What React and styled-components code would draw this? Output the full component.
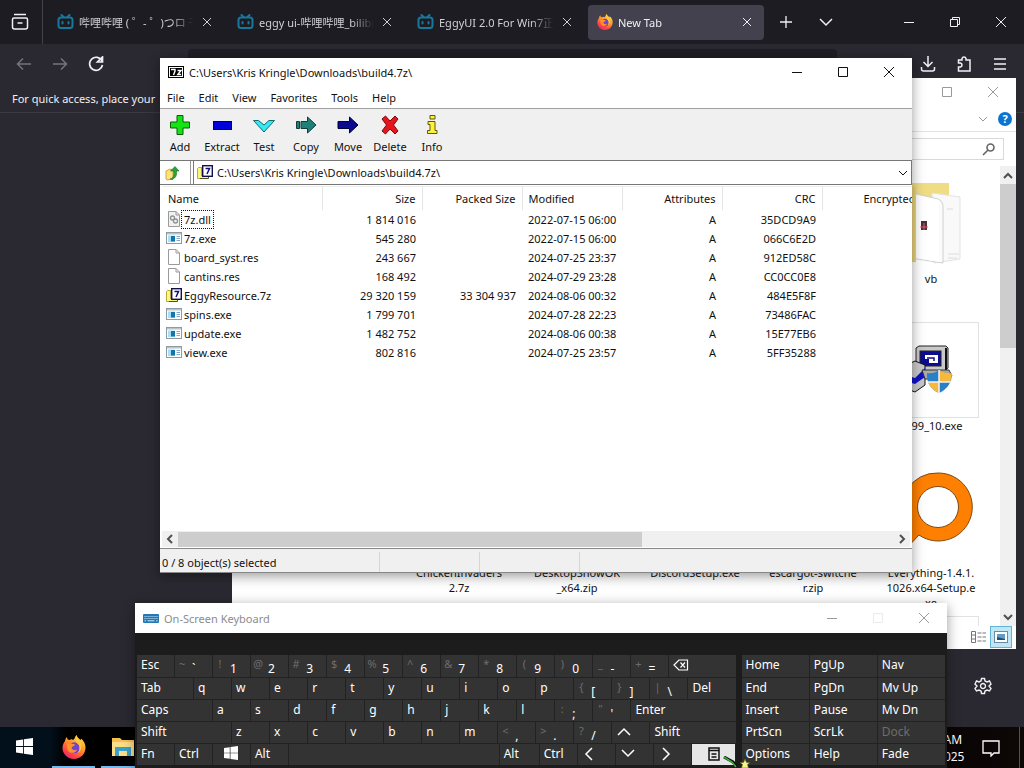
// Desktop - Windows session with a browser, file explorer, 7-Zip and the on-screen keyboard

import React, { useState } from 'react';
import styled, { createGlobalStyle, css } from 'styled-components';

const GlobalStyle = createGlobalStyle`
  * { box-sizing: border-box; }
  body {
    margin: 0;
    overflow: hidden;
    background: #000;
    font-family: "Noto Sans", "Open Sans", "Noto Sans CJK SC", sans-serif;
    font-size: 11px;
    line-height: 15px;
    color: #111;
  }
  button, input, select { font: inherit; color: inherit; }
  button { padding: 0; border: 0; background: none; }
`

const Desktop = styled.div`
  position: relative;
  display: flex;
  flex-direction: column;
  height: 100vh;
  overflow: hidden;
`

const Win = styled.section`
  position: absolute;
  left: ${p => p.$x}px;
  top: ${p => p.$y}px;
  width: ${p => p.$w}px;
  height: ${p => p.$h ? p.$h + 'px' : 'auto'};
  display: flex;
  flex-direction: column;
  background: #fff;
  box-shadow: ${p => p.$flat ? 'none' : '0 3px 12px rgba(0, 0, 0, 0.4)'};
`

const TitleBar = styled.header`
  display: flex;
  align-items: center;
  flex: none;
  height: ${p => p.$h || 28}px;
  padding-left: 8px;
  gap: 5px;
  color: ${p => p.$dim ? '#8c8c8c' : '#111'};
`

const Title = styled.h1`
  margin: 0;
  flex: 1;
  font-size: 11px;
  font-weight: 400;
  white-space: nowrap;
`

const Controls = styled.div`
  display: flex;
  color: ${p => p.$color || '#111'};
`

const ControlButton = styled.button`
  width: 46px;
  height: 28px;
  display: grid;
  place-items: center;
  opacity: ${p => p.$faint ? 0.2 : 1};
`

/* ---------- browser ---------- */

const Browser = styled.main`
  flex: 1;
  min-height: 0;
  display: flex;
  flex-direction: column;
  background: #2a2931;
  color: #f0f0f4;
`

const TabStrip = styled.div`
  height: 44px;
  flex: none;
  display: flex;
  align-items: center;
  background: #1d1c23;
`

const SidebarButton = styled.button`
  width: 43px;
  height: 44px;
  padding-right: 3px;
  display: grid;
  place-items: center;
  border-right: 1px solid #44434b;
  margin-right: 5px;
`

const Tab = styled.div`
  width: 176px;
  height: 35px;
  margin-right: 4px;
  padding: 0 8px 0 9px;
  display: flex;
  align-items: center;
  gap: 5px;
  border-radius: 4px;
  background: ${p => p.$active ? '#42414d' : 'transparent'};
  color: ${p => p.$active ? '#f0f0f4' : '#cfcfd4'};
`

const TabLabel = styled.span`
  flex: 1;
  margin-right: -7px;
  overflow: hidden;
  white-space: nowrap;
  mask-image: linear-gradient(to right, #000 76%, transparent 95%);
`

const IconButton = styled.button`
  width: ${p => p.$w || 36}px;
  height: 36px;
  display: grid;
  place-items: center;
  color: ${p => p.$dim ? '#75747b' : 'inherit'};
`

const Spacer = styled.div`
  flex: 1;
`

const NavBar = styled.div`
  height: 40px;
  flex: none;
  display: flex;
  align-items: center;
  padding: 0 6px;
`

const UrlField = styled.input`
  flex: 1;
  height: 30px;
  margin: 0 73px 0 74px;
  border: 0;
  border-radius: 4px;
  background: #1f1e24;
`

const BookmarkBar = styled.div`
  height: 29px;
  flex: none;
  padding: 7px 12px;
  border-bottom: 1px solid #3a3941;
  white-space: nowrap;
`

const Customize = styled.button`
  margin: auto 32px 30px auto;
  color: #f0f0f4;
  width: 18px;
  height: 20px;
`

/* ---------- explorer ---------- */

const RibbonRow = styled.div`
  height: 26px;
  flex: none;
  display: flex;
  align-items: center;
  justify-content: flex-end;
  gap: 10px;
  padding-right: 4px;
  border-bottom: 1px solid #e4e4e4;
  color: #999;
`

const HelpBadge = styled.button`
  width: 14px;
  height: 14px;
  border-radius: 50%;
  background: #0a74d0;
  color: #fff;
  font-weight: 700;
  line-height: 14px;
`

const SearchRow = styled.div`
  height: 34px;
  flex: none;
  display: flex;
  justify-content: flex-end;
  padding: 6px 12px;
`

const SearchBox = styled.label`
  display: flex;
  align-items: center;
  width: 170px;
  height: 22px;
  padding-right: 8px;
  border: 1px solid #d9d9d9;
  color: #666;

  input {
    flex: 1;
    min-width: 0;
    border: 0;
    outline: 0;
  }
`

const ExplorerBody = styled.div`
  flex: 1;
  min-height: 0;
  display: flex;
`

const FileGrid = styled.div`
  flex: 1;
  overflow: hidden;
  display: grid;
  grid-template-columns: repeat(5, 118px);
  grid-auto-rows: 147px;
  justify-content: end;
  padding: 9px 10px 0 0;
`

const FileItem = styled.div`
  display: flex;
  flex-direction: column;
  align-items: center;
  text-align: center;
`

const Thumb = styled.div`
  width: 96px;
  height: 96px;
  flex: none;
  display: grid;
  place-items: center;
  border: 1px solid ${p => p.$framed ? '#e2e2e2' : 'transparent'};
`

const FileName = styled.span`
  white-space: pre;
`

const VScroll = styled.div`
  width: 16px;
  display: flex;
  flex-direction: column;
  align-items: center;
  background: #f0f0f0;
  color: #505050;

  button {
    height: 18px;
    flex: none;
  }
`

const VThumb = styled.div`
  width: 16px;
  height: 164px;
  background: #cdcdcd;
  margin-bottom: auto;
`

const ExplorerStatus = styled.footer`
  height: 23px;
  flex: none;
  display: flex;
  justify-content: flex-end;
  padding-right: 4px;
`

const ViewButton = styled.button`
  width: 22px;
  height: 22px;
  display: grid;
  place-items: center;
  border: 1px solid ${p => p.$on ? '#5fb4d8' : 'transparent'};
  background: ${p => p.$on ? '#bfe6f7' : 'transparent'};
`

/* ---------- 7-Zip ---------- */

const MenuBar = styled.nav`
  display: flex;
  gap: 14px;
  height: 23px;
  flex: none;
  padding: 4px 7px;
  border-bottom: 1px solid #a0a0a0;
`

const Toolbar = styled.div`
  display: flex;
  height: 51px;
  flex: none;
  background: #f0f0f0;
`

const Tool = styled.button`
  width: 42px;
  padding: 5px 2px 0 0;
  display: flex;
  flex-direction: column;
  align-items: center;
  gap: 3px;

  svg { flex: none; }
`

const AddressRow = styled.div`
  display: flex;
  gap: 2px;
  height: 25px;
  flex: none;
  border-top: 1px solid #777;
  border-bottom: 1px solid #777;
`

const UpButton = styled.button`
  width: 31px;
  padding-right: 5px;
  display: grid;
  place-items: center;
  border-right: 1px solid #999;
`

const Combo = styled.label`
  flex: 1;
  display: flex;
  align-items: center;
  gap: 4px;
  padding: 0 3px;
  border: 0 solid #777;
  border-width: 0 1px;

  select {
    flex: 1;
    appearance: none;
    border: 0;
    padding: 0;
    background: none;
    outline: 0;
  }
`

const ListArea = styled.div`
  flex: 1;
  min-height: 0;
  overflow: hidden;
  padding: 1px 1px 0 2px;
`

const FileTable = styled.table`
  width: 860px;
  table-layout: fixed;
  border-collapse: collapse;

  th {
    height: 23px;
    padding: 0 6px;
    font-weight: 400;
    border-right: 1px solid #e5e5e5;
    border-top: 1px solid #ededed;
  }

  td {
    height: 19px;
    padding: 0 6px;
    white-space: nowrap;
  }

  td:first-child { padding: 0 4px; }
`

const cell = css`
  text-align: ${p => p.$left ? 'left' : 'right'};
`

const Th = styled.th`
  ${cell}
`

const Td = styled.td`
  ${cell}
`

const NameCell = styled.span`
  display: flex;
  align-items: center;

  span {
    padding: 1px 2px;
    outline: ${p => p.$focused ? '1px dotted #111' : 'none'};
  }
`

const HScroll = styled.div`
  display: flex;
  align-items: center;
  height: 16px;
  flex: none;
  margin: 0 2px 1px;
  background: #f0f0f0;
  color: #505050;

  button {
    width: 16px;
    height: 16px;
    line-height: 0;
  }
`

const HThumb = styled.div`
  width: 62%;
  height: 15px;
  margin-right: auto;
  background: #cdcdcd;
`

const StatusBar = styled.footer`
  display: flex;
  height: 25px;
  flex: none;
  padding-top: 3px;
  background: #f0f0f0;
  border-top: 1px solid #888;
  border-bottom: 1px solid #888;
`

const StatusPart = styled.span`
  width: ${p => p.$w}px;
  padding: 3px 0 0 2px;
  border-right: 1px solid #d5d5d5;
`

/* ---------- on-screen keyboard ---------- */

const KeyboardBody = styled.div`
  display: flex;
  gap: 6px;
  padding: 22px 2px 4px;
  background: #1c1c1c;
  color: #fff;
`

const KeyPad = styled.div`
  flex: ${p => p.$grow} 1 0;
  min-width: 0;
  display: flex;
  flex-direction: column;
  gap: 1px;
  background: #222;
`

const KeyRow = styled.div`
  display: flex;
  gap: 1px;
  height: 21px;

  &:first-child { height: 22px; }
`

const Key = styled.button`
  flex: ${p => p.$u || 38} 1 ${p => (p.$u || 38) - 1}px;
  min-width: 0;
  display: flex;
  gap: 5px;
  align-items: flex-start;
  padding: 2px 4px;
  font-size: 12px;
  background: ${p => p.$light ? '#e6e6e6' : '#333'};
  color: ${p => p.$light ? '#111' : p.$dim ? '#6d6d6d' : '#fff'};
  justify-content: ${p => p.$center ? 'center' : 'flex-start'};

  svg { flex: none; }
`

const ShiftMark = styled.span`
  width: 10px;
  margin-left: -2px;
  line-height: 13px;
  color: #6d6d6d;
  font-size: 11px;
  text-align: center;
`

const BaseMark = styled.span`
  padding-top: 4px;
`

/* ---------- taskbar ---------- */

const Taskbar = styled.footer`
  height: 41px;
  flex: none;
  display: flex;
  background: linear-gradient(to right, #02101b 0, #02101b 50px, #000 66px, #000 70%, #0d0706 100%);
  color: #fff;
`

const TaskButton = styled.button`
  width: 49px;
  display: grid;
  place-items: center;
  border-bottom: 2px solid transparent;
  border-image: ${p => p.$open ? 'linear-gradient(to right, transparent 5px, #76b9ed 5px, #76b9ed 44px, transparent 44px) 2' : 'none'};
`

const Clock = styled.time`
  margin-left: auto;
  padding-top: 4px;
  width: 60px;
  font-size: 12px;
  line-height: 17px;
  text-align: center;
`

const NotifyButton = styled.button`
  width: 54px;
  margin-right: 4px;
  padding-right: 4px;
  border-right: 1px solid #55514f;
  display: grid;
  place-items: center;
`

const Pointer = styled.svg`
  position: absolute;
  left: 723px;
  top: 756px;
`

/* ---------- drawings ---------- */

const Line = ({ d, w = 12, sw = 1, color = 'currentColor', ...rest }) => (
    <svg width={w} height={w} viewBox={`0 0 ${w} ${w}`} fill='none' stroke={color} strokeWidth={sw} {...rest}>
        <path d={d} />
    </svg>
)

const CloseGlyph = ({ w = 12, sw = 1 }) => <Line w={w} sw={sw} d={`M1 1L${w - 1} ${w - 1}M${w - 1} 1L1 ${w - 1}`} />
const ChevronDown = ({ w = 10, sw = 1 }) => <Line w={w} sw={sw} d={`M1 ${w / 2 - 2}L${w / 2} ${w / 2 + 2}L${w - 1} ${w / 2 - 2}`} />

const WindowControls = ({ color, restore, faintMax }) => (
    <Controls $color={color}>
        <ControlButton aria-label='Minimize'><Line d='M1 6.5H11' /></ControlButton>
        <ControlButton aria-label='Maximize' $faint={faintMax}>
            <Line d={restore ? 'M1.5 3.5H8.5V10.5H1.5zM3.5 3V1.5H10.5V8.5H9' : 'M1.5 1.5H10.5V10.5H1.5z'} />
        </ControlButton>
        <ControlButton aria-label='Close'><CloseGlyph /></ControlButton>
    </Controls>
)

const BiliIcon = () => (
    <svg width='17' height='16' viewBox='0 0 17 16' fill='none' stroke='#16789c' strokeWidth='2' strokeLinecap='round'>
        <path d='M4.5 1L6.5 3M12.5 1L10.5 3' />
        <rect x='1.5' y='3.5' width='14' height='10.5' rx='2.5' />
        <path d='M5.5 8V9.5M11.5 8V9.5' />
    </svg>
)

const FirefoxIcon = ({ size }) => (
    <svg width={size} height={size} viewBox='0 0 24 24'>
        <defs>
            <linearGradient id='fox' x1='0.8' y1='0' x2='0.2' y2='1'>
                <stop offset='0' stopColor='#ffe14d' />
                <stop offset='0.4' stopColor='#ff9a2a' />
                <stop offset='0.75' stopColor='#ff4545' />
                <stop offset='1' stopColor='#e0207c' />
            </linearGradient>
        </defs>
        <path fill='url(#fox)' d='M3 6C3 4.500 4 3 5 2C5 4 6 5 7.500 5C9 4 10 4 11 5C13 4 12.500 2 14.500 0C15 2.500 17 3.500 18.500 5C19 4.800 19 4 19 3.500C22 6 23.500 9 23.500 12.500C23.500 19 18.500 24 12 24C5.500 24 .5 19 .5 13C.5 10 1.500 8 3 6z' />
        <circle cx='12.300' cy='12.800' r='5.500' fill='#7542d6' />
        <path fill='#ff9426' d='M5 9C7 8 9 8 10.500 9C12 9 13 9.500 13 10C12 11.500 10 11 9.500 13C10 15 13 16 15 14.500C14 18.500 8 19 6 15.500C5 13 5 11 5 9z' />
        <path fill='#ffc83a' d='M14.500 0C15 3 19.500 5 19.500 11C19.500 14 18 17 16 18C18 15 18 11 16 9C15 8 12 5 14.500 0z' />
    </svg>
)

const WindowsLogo = ({ size }) => (
    <svg width={size} height={size} viewBox='0 0 16 16' fill='#fff'>
        <path d='M0 2.300L6.600 1.300V7.600H0zM7.400 1.200L16 0V7.600H7.400zM0 8.400H6.600V14.700L0 13.700zM7.400 8.400H16V16L7.400 14.800z' />
    </svg>
)

const SevenZipIcon = () => (
    <svg width='16' height='12' viewBox='0 0 16 12'>
        <rect width='16' height='12' fill='#000' />
        <rect x='1.500' y='1.500' width='13' height='9' fill='none' stroke='#fff' />
        <path d='M3 3.500H7V5L5.500 9M9.500 4.500H13L9.800 8.500H13.200' fill='none' stroke='#fff' strokeWidth='1.400' />
    </svg>
)

const ArchiveIcon = () => (
    <svg width='16' height='15' viewBox='0 0 16 15'>
        <path d='M.5 3.500L1.500 2.500H6V13.500H.5z' fill='#fdf67a' stroke='#b8aa3c' />
        <path d='M3 13.500H11.500V11H5V3' fill='#fdf67a' stroke='#555020' />
        <rect x='5.700' y='.7' width='9.600' height='10.600' fill='#fff' stroke='#10104a' strokeWidth='1.400' />
        <path d='M8.500 3.500H12.500L10 9' fill='none' stroke='#10107a' strokeWidth='1.500' />
    </svg>
)

const ExeIcon = () => (
    <svg width='16' height='12' viewBox='0 0 16 12'>
        <rect x='.5' y='.5' width='15' height='11' fill='#fff' stroke='#8f9aa3' />
        <rect x='1' y='1' width='14' height='1.500' fill='#b9c4cc' />
        <rect x='2' y='3.500' width='7' height='6.500' fill='#a9e0f5' />
        <rect x='5' y='4' width='4' height='5.500' fill='#1376a8' />
        <path d='M10.500 4.500H14M10.500 6.500H14M10.500 8.500H14' stroke='#7aa9cc' />
    </svg>
)

const PageIcon = ({ gears }) => (
    <svg width='16' height='16' viewBox='0 0 16 16' fill='none' stroke='#9a9a9a'>
        <path d='M2.500 .5H10L13.500 4V15.500H2.500z' fill={gears ? '#f1f1f1' : '#fff'} />
        <path d='M10 .5V4H13.500' />
        {gears && <g stroke='#8c9296' strokeWidth='1.300'><circle cx='6.500' cy='7' r='2' /><circle cx='9.500' cy='10' r='2' /></g>}
    </svg>
)

const icons = {
    dll: <PageIcon gears />,
    exe: <ExeIcon />,
    res: <PageIcon />,
    '7z': <ArchiveIcon />
}

const UpIcon = () => (
    <svg width='15' height='16' viewBox='0 0 15 16'>
        <path d='M1 6L5 4L8 5V14L2 15L1 14z' fill='#ffe27a' stroke='#d1ab3a' />
        <path d='M5 14C9 13 9 10 8.500 6H5.500L10 1.500L14 6H11.500C12 10 11 13 7 14.500z' fill='#2fa03b' stroke='#1b6f26' strokeWidth='.6' />
    </svg>
)

const toolIcons = {
    Add: <path d='M8 1.500H14V8H20.500V14H14V20.500H8V14H1.500V8H8z' fill='#14e314' stroke='#0a5c0a' />,
    Extract: <rect x='2.500' y='7.500' width='18' height='8' fill='#0000d8' stroke='#000050' />,
    Test: <path d='M.5 6.500H5.500L11 11L16 6.500H21.500L11 18z' fill='#35e9f2' stroke='#116a70' />,
    Copy: <path d='M1.500 7.500H4.500V14.500H1.500zM6 7.500H12.500V3L21 11L12.500 19V14.500H6z' fill='#1f8078' stroke='#113a38' />,
    Move: <path d='M1 7.500H12.500V3L21 11L12.500 19V14.500H1z' fill='#0a0a90' stroke='#000038' />,
    Delete: <path d='M3 5L6.500 2L11 7L16 2L19 5L14.500 11L19 17L16 20L11 15L6.500 20L3 17L7.500 11z' fill='#e8141c' stroke='#7c0a0e' />,
    Info: <path d='M9 1.500H14V5H9zM7 7.500H14V16.500H16V19.500H6.500V16.500H9V10.500H7z' fill='#fff23a' stroke='#5c5610' />
}

const VbFolder = () => (
    <svg width='96' height='88' viewBox='0 0 96 88'>
        <path d='M8 4H65V30L8 84z' fill='#f0dc83' />
        <path d='M48 14L76 18V80L50 84z' fill='#f9f9f9' stroke='#e3e3e3' />
        <path d='M20 12L54 20Q59 22 59 28V84L20 78z' fill='#fbfbfb' stroke='#d0d0d0' />
        <path d='M8 8H32V83L8 84z' fill='#e9d37b' />
        <path d='M32 16L55 21V83L32 79z' fill='#fff' />
        <path d='M37 42H43V51H37z' fill='#4a3038' /><path d='M36 48H44M40 44V51' stroke='#eb5b6a' />
        <path d='M63 30H69M64 75H75M64 79H73' stroke='#d8dfd4' />
    </svg>
)

const SetupIcon = () => (
    <svg width='52' height='50' viewBox='4 0 52 50'>
        <path d='M15 3L18 1H45L47 3V23L43 26H15z' fill='#c9c9c9' stroke='#222' />
        <path d='M45 3V25M17 26H45' stroke='#111' strokeWidth='2' />
        <rect x='19' y='6' width='21' height='15' fill='#0c0c90' stroke='#222' />
        <path d='M24 10H37V18H28V14H24z' fill='#fff' />
        <path d='M26 13H33V16' fill='none' stroke='#0c0c90' strokeWidth='1.500' />
        <path d='M1 22L14 16L24 20V40L14 47L1 42z' fill='#c8c8c8' stroke='#111' />
        <path d='M1 29L14 33L24 23V32L14 39L1 35z' fill='#1010c8' />
        <path d='M21 25H48L51 31L46 34H24z' fill='#aaa' stroke='#333' />
        <path d='M38 25Q44 29 51 28Q51 42 38 48Q25 42 26 28Q33 29 38 25z' fill='#2a80c8' />
        <path d='M38 25Q44 29 51 28Q51 33 49 37H38zM38 37V48Q29 44 27 37z' fill='#f6b93c' />
        <path d='M38 25V48M26 37H50' stroke='#f4f4f4' strokeWidth='1.500' />
    </svg>
)

const EverythingIcon = () => (
    <svg width='90' height='90' viewBox='1 4 90 90'>
        <path d='M53 5A34 34 0 1 1 34 67L18 84L7 73L22 56A34 34 0 0 1 53 5z' fill='#ff8000' stroke='#7e4a16' />
        <circle cx='53' cy='39' r='20.500' fill='#fff' stroke='#7e4a16' />
    </svg>
)

const StarPointer = () => (
    <Pointer width='28' height='12' viewBox='0 0 28 12'>
        <path d='M1 1L10 6L14 11' fill='none' stroke='#111' strokeWidth='3' />
        <path d='M1 1L9 6L13 11' fill='none' stroke='#3fae3a' strokeWidth='1.500' />
        <path d='M22 3L23.500 6.500H27L24.500 8.500L25.500 12H18.500L19.500 8.500L17 6.500H20.500z' fill='#f6f58a' stroke='#5c5a10' strokeWidth='.6' />
    </Pointer>
)

/* ---------- data ---------- */

const tabs = [
    { title: '哔哩哔哩 ( ゜- ゜)つロ 干杯' },
    { title: 'eggy ui-哔哩哔哩_bilibili' },
    { title: 'EggyUI 2.0 For Win7正式' },
    { title: 'New Tab', active: true }
]

const files = [
    ['7z.dll', '1 814 016', '', '2022-07-15 06:00', '35DCD9A9'],
    ['7z.exe', '545 280', '', '2022-07-15 06:00', '066C6E2D'],
    ['board_syst.res', '243 667', '', '2024-07-25 23:37', '912ED58C'],
    ['cantins.res', '168 492', '', '2024-07-29 23:28', 'CC0CC0E8'],
    ['EggyResource.7z', '29 320 159', '33 304 937', '2024-08-06 00:32', '484E5F8F'],
    ['spins.exe', '1 799 701', '', '2024-07-28 22:23', '73486FAC'],
    ['update.exe', '1 482 752', '', '2024-08-06 00:38', '15E77EB6'],
    ['view.exe', '802 816', '', '2024-07-25 23:57', '5FF35288']
]

const downloads = [
    {}, {}, {}, {}, { name: 'vb', icon: <VbFolder /> },
    {}, {}, {}, {}, { name: 'y399_10.exe', icon: <SetupIcon />, framed: true },
    { name: 'ChickenInvaders\n2.7z' },
    { name: 'DesktopShowOK\n_x64.zip' },
    { name: 'DiscordSetup.exe' },
    { name: 'escargot-switche\nr.zip' },
    { name: 'Everything-1.4.1.\n1026.x64-Setup.e\nxe', icon: <EverythingIcon /> },
    {}, {}, {}, {}, { framed: true }
]

const up = <Line w={16} sw={1.5} d='M2 11L8 5L14 11' />
const down = <Line w={16} sw={1.5} d='M2 4L8 10L14 4' />
const left = <Line w={16} sw={1.5} d='M10 2L4 8L10 14' />
const right = <Line w={16} sw={1.5} d='M5 2L11 8L5 14' />
const erase = <Line w={16} sw={1.2} d='M1 8L6 3H14.5V13H6zM7.5 5.500L12 10.500M12 5.500L7.500 10.500' />
const menu = <Line w={16} sw={1.5} d='M3 2H13V14H3zM3 4.500H13M5.500 8H10.500M5.500 11H10.500' />
const winKey = <WindowsLogo size={14} />

// a plain string is a letter key, otherwise [label, width, shifted mark]
const keyRows = [
    [['Esc'], ['`', 38, '~'], ['1', 38, '!'], ['2', 38, '@'], ['3', 38, '#'], ['4', 38, '$'], ['5', 38, '%'],
        ['6', 38, '^'], ['7', 38, '&'], ['8', 38, '*'], ['9', 38, '('], ['0', 38, ')'], ['-', 38, '_'], ['=', 38, '+'], [erase, 67]],
    [['Tab', 57], 'q', 'w', 'e', 'r', 't', 'y', 'u', 'i', 'o', 'p', ['[', 38, '{'], [']', 38, '}'], ['\\', 38, '|'], ['Del', 48]],
    [['Caps', 76], 'a', 's', 'd', 'f', 'g', 'h', 'j', 'k', 'l', [';', 38, ':'], ["'", 38, '"'], ['Enter', 105]],
    [['Shift', 95], 'z', 'x', 'c', 'v', 'b', 'n', 'm', [',', 38, '<'], ['.', 38, '>'], ['/', 38, '?'], [up], ['Shift', 86]],
    [['Fn'], ['Ctrl'], [winKey], ['Alt'], ['', 211], ['Alt', 40], ['Ctrl'], [left], [down], [right], [menu, 45]]
]

const navKeys = [
    ['Home', 'PgUp', 'Nav'],
    ['End', 'PgDn', 'Mv Up'],
    ['Insert', 'Pause', 'Mv Dn'],
    ['PrtScn', 'ScrLk', 'Dock'],
    ['Options', 'Help', 'Fade']
]

/* ---------- windows ---------- */

const BrowserWindow = () => (
    <Browser>
        <TabStrip>
            <SidebarButton aria-label='Tab list'>
                <Line w={18} sw={1.5} d='M3 1.500H15M3 5H15Q16.500 5 16.500 6.500V14Q16.500 16 14.500 16H3.500Q1.500 16 1.500 14V6.500Q1.500 5 3 5zM6.500 10H11.500' />
            </SidebarButton>
            {tabs.map(tab => (
                <Tab key={tab.title} $active={tab.active}>
                    {tab.active ? <FirefoxIcon size={16} /> : <BiliIcon />}
                    <TabLabel>{tab.title}</TabLabel>
                    <IconButton $w={18} aria-label='Close tab'><CloseGlyph w={10} /></IconButton>
                </Tab>
            ))}
            <IconButton aria-label='New tab'><Line w={14} sw={1.3} d='M7 1V13M1 7H13' /></IconButton>
            <IconButton $w={44} aria-label='List all tabs'>
                <Line w={14} sw={1.5} d='M1 4L7 10L13 4' />
            </IconButton>
            <Spacer />
            <WindowControls color='#f0f0f4' restore />
        </TabStrip>
        <NavBar>
            <IconButton $dim aria-label='Back'><Line w={16} sw={1.5} d='M15 8H1.500M7 2.500L1.500 8L7 13.500' /></IconButton>
            <IconButton $dim aria-label='Forward'><Line w={16} sw={1.5} d='M1 8H14.500M9 2.500L14.500 8L9 13.500' /></IconButton>
            <IconButton aria-label='Reload'><Line w={16} sw={1.7} d='M14 5A6.500 6.500 0 1 0 14.500 9M14.500 1V6H9.500z' /></IconButton>
            <UrlField aria-label='Address' />
            <IconButton aria-label='Downloads'><Line w={16} sw={1.5} d='M8 0V10M3.500 6L8 10.500L12.500 6M1.500 11V13Q1.500 15 3.500 15H12.500Q14.500 15 14.500 13V11' /></IconButton>
            <IconButton aria-label='Extensions'><Line w={16} sw={1.5} d='M2.500 15V11H4.500Q6 10.500 6 9Q6 7.500 4.500 7H2.500V4H6V2.500Q6.500 1 8 1Q9.500 1 10 2.500V4H14V15z' /></IconButton>
            <IconButton aria-label='Menu'><Line w={14} sw={1.5} d='M1 2H13M1 7H13M1 12H13' /></IconButton>
        </NavBar>
        <BookmarkBar>For quick access, place your</BookmarkBar>
        <Customize aria-label='Customize'>
            <Line w={18} sw={1.4} d='M7.500 1.500H10.500L11 4L13 5L15.500 4L17 7L15 9L17 11.500L15.500 14L13 13L11 14L10.500 16.500H7.500L7 14L5 13L2.500 14L1 11.500L3 9L1 7L2.500 4L5 5L7 4zM11.500 9A2.500 2.500 0 1 1 6.500 9A2.500 2.500 0 1 1 11.500 9' />
        </Customize>
    </Browser>
)

const Explorer = () => (
    <Win $x={232} $y={78} $w={784} $h={571} $flat>
        <TitleBar>
            <Spacer />
            <WindowControls color='#999' />
        </TitleBar>
        <RibbonRow>
            <ChevronDown w={10} />
            <HelpBadge aria-label='Help'>?</HelpBadge>
        </RibbonRow>
        <SearchRow>
            <SearchBox>
                <input type='search' aria-label='Search Downloads' />
                <Line w={13} sw={1.6} d='M12 4.500A3.500 3.500 0 1 1 5 4.500A3.500 3.500 0 1 1 12 4.500M6 7L1 12' />
            </SearchBox>
        </SearchRow>
        <ExplorerBody>
            <FileGrid>
                {downloads.map((item, i) => (
                    <FileItem key={i}>
                        <Thumb $framed={item.framed}>{item.icon}</Thumb>
                        <FileName>{item.name}</FileName>
                    </FileItem>
                ))}
            </FileGrid>
            <VScroll>
                <button aria-label='Scroll up'><Line w={10} sw={2} d='M1 8L5 4L9 8' /></button>
                <VThumb />
                <button aria-label='Scroll down'><ChevronDown sw={2} /></button>
            </VScroll>
        </ExplorerBody>
        <ExplorerStatus>
            <ViewButton aria-label='Details view'>
                <svg width='16' height='12' viewBox='0 0 16 12' fill='none' stroke='#777'>
                    <path d='M.5 .5H4.500V11.500H.5zM.5 4H4.500M.5 8H4.500' />
                    <path d='M6.500 2H15M6.500 6H15M6.500 10H15' strokeDasharray='4 1' />
                </svg>
            </ViewButton>
            <ViewButton $on aria-label='Large icons view'>
                <svg width='14' height='12' viewBox='0 0 14 12'>
                    <rect x='.5' y='.5' width='13' height='11' fill='#fff' stroke='#6a8ca0' />
                    <path d='M3 3H11V9H3z' fill='#5f9dc8' /><path d='M3 6L7 7L11 8V9H3z' fill='#24506e' />
                </svg>
            </ViewButton>
        </ExplorerStatus>
    </Win>
)

const SevenZip = () => {
    const [selected] = useState('7z.dll')

    return (
        <Win $x={160} $y={58} $w={752} $h={515}>
            <TitleBar>
                <SevenZipIcon />
                <Title>C:\Users\Kris Kringle\Downloads\build4.7z\</Title>
                <WindowControls />
            </TitleBar>
            <MenuBar>
                {['File', 'Edit', 'View', 'Favorites', 'Tools', 'Help'].map(name => <button key={name}>{name}</button>)}
            </MenuBar>
            <Toolbar>
                {Object.keys(toolIcons).map(name => (
                    <Tool key={name}>
                        <svg width='22' height='22' viewBox='0 0 22 22'>{toolIcons[name]}</svg>
                        {name}
                    </Tool>
                ))}
            </Toolbar>
            <AddressRow>
                <UpButton aria-label='Up One Level'><UpIcon /></UpButton>
                <Combo>
                    <ArchiveIcon />
                    <select aria-label='Path'>
                        <option>C:\Users\Kris Kringle\Downloads\build4.7z\</option>
                    </select>
                    <ChevronDown />
                </Combo>
            </AddressRow>
            <ListArea>
                <FileTable>
                    <colgroup>
                        <col width='160' />
                        <col span='7' width='100' />
                    </colgroup>
                    <thead>
                        <tr>
                            <Th $left>Name</Th>
                            <Th>Size</Th>
                            <Th>Packed Size</Th>
                            <Th $left>Modified</Th>
                            <Th>Attributes</Th>
                            <Th>CRC</Th>
                            <Th>Encrypted</Th>
                        </tr>
                    </thead>
                    <tbody>
                        {files.map(([name, size, packed, modified, crc]) => (
                            <tr key={name}>
                                <Td $left>
                                    <NameCell $focused={name === selected}>{icons[name.split('.')[1]]}<span>{name}</span></NameCell>
                                </Td>
                                <Td>{size}</Td>
                                <Td>{packed}</Td>
                                <Td $left>{modified}</Td>
                                <Td>A</Td>
                                <Td>{crc}</Td>
                                <Td />
                            </tr>
                        ))}
                    </tbody>
                </FileTable>
            </ListArea>
            <HScroll>
                <button aria-label='Scroll left'><Line w={10} sw={2} d='M7 1L3 5L7 9' /></button>
                <HThumb />
                <button aria-label='Scroll right'><Line w={10} sw={2} d='M3 1L7 5L3 9' /></button>
            </HScroll>
            <StatusBar>
                <StatusPart $w={220}>0 / 8 object(s) selected</StatusPart>
                <StatusPart $w={100} />
                <StatusPart $w={100} />
            </StatusBar>
        </Win>
    )
}

const Keyboard = () => (
    <Win $x={135} $y={603} $w={812}>
        <TitleBar $h={30} $dim>
            <svg width='16' height='9' viewBox='0 0 16 9'>
                <rect width='16' height='9' rx='1' fill='#2278b5' />
                <path d='M1.500 2.500H15M1.500 4.500H15' stroke='#cfe6f5' strokeDasharray='1 1' />
                <path d='M1.500 6.800H3M4.500 6.800H11.500M13 6.800H14.500' stroke='#cfe6f5' />
            </svg>
            <Title>On-Screen Keyboard</Title>
            <WindowControls color='#999' faintMax />
        </TitleBar>
        <KeyboardBody>
            <KeyPad $grow={600}>
                {keyRows.map((row, r) => (
                    <KeyRow key={r}>
                        {row.map((k, i) => {
                            const [label, units, mark] = Array.isArray(k) ? k : [k]
                            return (
                                <Key key={i} $u={units} $light={label === menu} $center={label === menu || label === winKey}>
                                    {mark && <ShiftMark>{mark}</ShiftMark>}
                                    {mark ? <BaseMark>{label}</BaseMark> : label}
                                </Key>
                            )
                        })}
                    </KeyRow>
                ))}
            </KeyPad>
            <KeyPad $grow={204}>
                {navKeys.map(row => (
                    <KeyRow key={row[0]}>
                        {row.map(name => <Key key={name} $dim={name === 'Dock'}>{name}</Key>)}
                    </KeyRow>
                ))}
            </KeyPad>
        </KeyboardBody>
    </Win>
)

export default function App() {
    return (
        <Desktop>
            <GlobalStyle />
            <BrowserWindow />
            <Taskbar>
                <TaskButton aria-label='Start'><WindowsLogo size={17} /></TaskButton>
                <TaskButton $open aria-label='Firefox'><FirefoxIcon size={24} /></TaskButton>
                <TaskButton $open aria-label='File Explorer'>
                    <svg width='24' height='20' viewBox='0 0 24 20'>
                        <path d='M1 1H9L11 3H23V18H1z' fill='#f5c04e' />
                        <path d='M1 5H23V19H1z' fill='#fcdd88' />
                        <path d='M4 10H20V19H16V14H8V19H4z' fill='#3aa0c8' />
                    </svg>
                </TaskButton>
                <Clock>10:20 AM<br />1/12/2025</Clock>
                <NotifyButton aria-label='Notifications'>
                    <Line w={18} sw={1.3} d='M1 2H17V14H12L9 17V14H1z' />
                </NotifyButton>
            </Taskbar>
            <Explorer />
            <SevenZip />
            <Keyboard />
            <StarPointer />
        </Desktop>
    )
}
